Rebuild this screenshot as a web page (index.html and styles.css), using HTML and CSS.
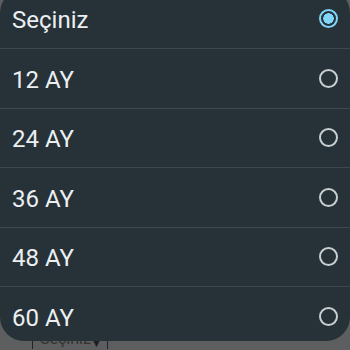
FILE: index.html
```html
<html lang="en">
<head>
    <meta charset="UTF-8">
    <meta name="viewport" content="width=device-width, initial-scale=1.0">
    <title>Vade Seçimi</title>
    <link rel="stylesheet" href="styles.css">
</head>
<body>
    <div class="dialog">
        <div class="option selected"><span>Seçiniz</span><i class="radio"></i></div>
        <div class="option"><span>12 AY</span><i class="radio"></i></div>
        <div class="option"><span>24 AY</span><i class="radio"></i></div>
        <div class="option"><span>36 AY</span><i class="radio"></i></div>
        <div class="option"><span>48 AY</span><i class="radio"></i></div>
        <div class="option"><span>60 AY</span><i class="radio"></i></div>
    </div>
    <div class="select"><span>Seçiniz</span><b>▼</b></div>
</body>
</html>
```

FILE: styles.css
```css
body {
    margin: 0;
    background: #5d5e5f;
    font-family: Roboto, "Noto Sans", sans-serif;
    overflow: hidden;
}
.dialog {
    position: relative;
    z-index: 2;
    margin-top: -11px;
    height: 352px;
    overflow: hidden;
    background: #263238;
    border-radius: 24px;
}
.option {
    display: flex;
    align-items: center;
    justify-content: space-between;
    height: 58.5px;
    padding: 0 12px;
    border-top: 1px solid #3d484e;
    color: #eceff1;
    font-size: 24px;
}
.option:first-child { height: 59px; border-top: none; }
.option span { padding-top: 3px; }
.radio {
    box-sizing: border-box;
    width: 19px;
    height: 19px;
    border: 2px solid #c9ced1;
    border-radius: 50%;
}
.selected .radio {
    border-color: #81d4fa;
    background: radial-gradient(circle, #81d4fa 0 5px, transparent 5.5px);
}
.select {
    display: flex;
    justify-content: space-between;
    width: 60px;
    height: 20px;
    margin: -12px 0 0 32px;
    padding: 0 7px;
    border-left: 1px solid #222;
    border-right: 1px solid #222;
    color: #333;
    font-size: 16px;
    line-height: 20px;
}
.select b {
    align-self: flex-end;
    font-size: 11px;
    line-height: 11px;
    color: #1f1f1f;
}
```
